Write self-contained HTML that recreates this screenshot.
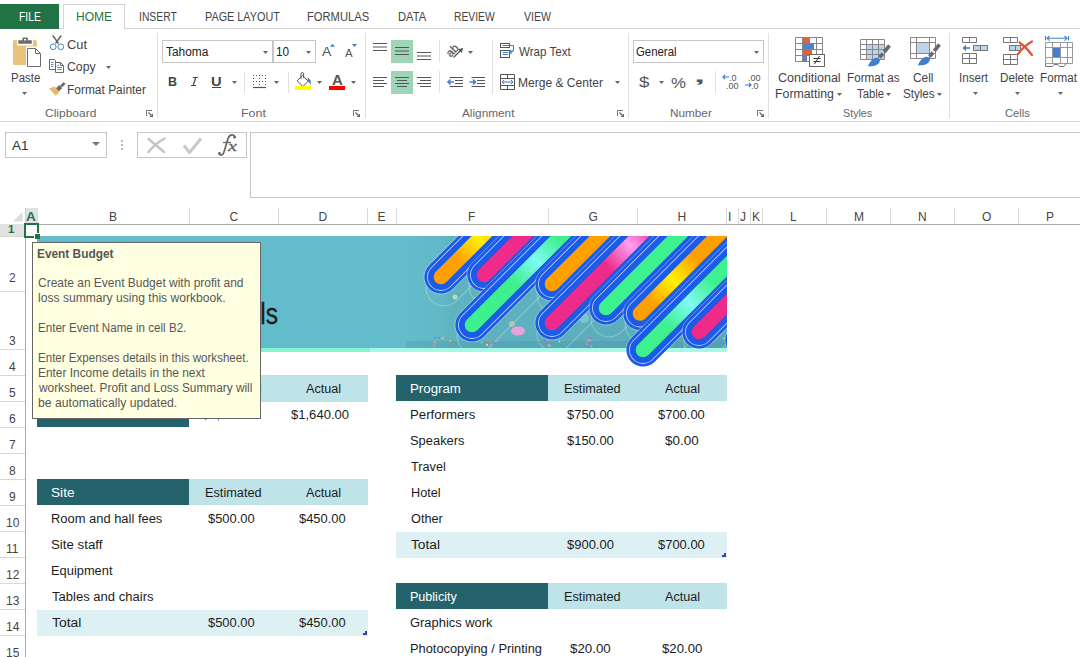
<!DOCTYPE html>
<html><head><meta charset="utf-8"><style>
html,body{margin:0;padding:0;width:1080px;height:657px;overflow:hidden;background:#fff;position:relative}
.t{position:absolute;font-family:"Liberation Sans",sans-serif;white-space:pre;transform-origin:0 0}
svg{position:absolute;overflow:visible}
</style></head><body>
<div style="position:absolute;left:0px;top:4px;width:59px;height:25px;background:#217346;"></div>
<div class="t" style="left:18.6px;top:10.9px;font-size:12.3px;line-height:12.3px;color:#ffffff;font-weight:400;transform:scaleX(0.8375);">FILE</div>
<div style="position:absolute;left:59px;top:28px;width:4px;height:1px;background:#d4d4d4;"></div>
<div style="position:absolute;left:124px;top:28px;width:956px;height:1px;background:#d4d4d4;"></div>
<div style="position:absolute;left:63px;top:4px;width:1px;height:25px;background:#d4d4d4;"></div>
<div style="position:absolute;left:124px;top:4px;width:1px;height:25px;background:#d4d4d4;"></div>
<div style="position:absolute;left:63px;top:4px;width:62px;height:1px;background:#d4d4d4;"></div>
<div class="t" style="left:75.5px;top:10.9px;font-size:12.3px;line-height:12.3px;color:#217346;font-weight:400;transform:scaleX(0.9800);">HOME</div>
<div class="t" style="left:139.2px;top:10.9px;font-size:12.3px;line-height:12.3px;color:#444444;font-weight:400;transform:scaleX(0.8419);">INSERT</div>
<div class="t" style="left:204.7px;top:10.9px;font-size:12.3px;line-height:12.3px;color:#444444;font-weight:400;transform:scaleX(0.8810);">PAGE LAYOUT</div>
<div class="t" style="left:307.4px;top:10.9px;font-size:12.3px;line-height:12.3px;color:#444444;font-weight:400;transform:scaleX(0.9090);">FORMULAS</div>
<div class="t" style="left:397.6px;top:10.9px;font-size:12.3px;line-height:12.3px;color:#444444;font-weight:400;transform:scaleX(0.9067);">DATA</div>
<div class="t" style="left:454.2px;top:10.9px;font-size:12.3px;line-height:12.3px;color:#444444;font-weight:400;transform:scaleX(0.8404);">REVIEW</div>
<div class="t" style="left:524.3px;top:10.9px;font-size:12.3px;line-height:12.3px;color:#444444;font-weight:400;transform:scaleX(0.8613);">VIEW</div>
<div style="position:absolute;left:0px;top:121px;width:1080px;height:1px;background:#d4d4d4;"></div>
<div style="position:absolute;left:157px;top:33px;width:1px;height:85px;background:#e1e1e1;"></div>
<div style="position:absolute;left:365px;top:33px;width:1px;height:85px;background:#e1e1e1;"></div>
<div style="position:absolute;left:628px;top:33px;width:1px;height:85px;background:#e1e1e1;"></div>
<div style="position:absolute;left:768px;top:33px;width:1px;height:85px;background:#e1e1e1;"></div>
<div style="position:absolute;left:949px;top:33px;width:1px;height:85px;background:#e1e1e1;"></div>
<div class="t" style="left:44.5px;top:107.9px;font-size:10.8px;line-height:10.8px;color:#666666;font-weight:400;transform:scaleX(1.1111);">Clipboard</div>
<div class="t" style="left:240.5px;top:107.9px;font-size:10.8px;line-height:10.8px;color:#666666;font-weight:400;transform:scaleX(1.1500);">Font</div>
<div class="t" style="left:462.4px;top:107.9px;font-size:10.8px;line-height:10.8px;color:#666666;font-weight:400;transform:scaleX(1.0917);">Alignment</div>
<div class="t" style="left:669.6px;top:107.9px;font-size:10.8px;line-height:10.8px;color:#666666;font-weight:400;transform:scaleX(1.0892);">Number</div>
<div class="t" style="left:843.4px;top:107.9px;font-size:10.8px;line-height:10.8px;color:#666666;font-weight:400;transform:scaleX(0.9929);">Styles</div>
<div class="t" style="left:1004.6px;top:107.9px;font-size:10.8px;line-height:10.8px;color:#666666;font-weight:400;transform:scaleX(1.0364);">Cells</div>
<svg style="left:146px;top:110px" width="8" height="8"><path d="M0.5 6V0.5H6" fill="none" stroke="#777" stroke-width="1"/><path d="M2.5 2.5L5.5 5.5" stroke="#666" stroke-width="1.2"/><path d="M7 3.5V7H3.5Z" fill="#666"/></svg>
<svg style="left:352.5px;top:110px" width="8" height="8"><path d="M0.5 6V0.5H6" fill="none" stroke="#777" stroke-width="1"/><path d="M2.5 2.5L5.5 5.5" stroke="#666" stroke-width="1.2"/><path d="M7 3.5V7H3.5Z" fill="#666"/></svg>
<svg style="left:616.5px;top:110px" width="8" height="8"><path d="M0.5 6V0.5H6" fill="none" stroke="#777" stroke-width="1"/><path d="M2.5 2.5L5.5 5.5" stroke="#666" stroke-width="1.2"/><path d="M7 3.5V7H3.5Z" fill="#666"/></svg>
<svg style="left:756.5px;top:110px" width="8" height="8"><path d="M0.5 6V0.5H6" fill="none" stroke="#777" stroke-width="1"/><path d="M2.5 2.5L5.5 5.5" stroke="#666" stroke-width="1.2"/><path d="M7 3.5V7H3.5Z" fill="#666"/></svg>
<svg style="left:0;top:0" width="160" height="100">
<path d="M14.5 40H17V45.5H33V40H35.5Q37 40 37 41.5V46.5H26V65H14.5Q13 65 13 63.5V41.5Q13 40 14.5 40Z" fill="#ebc27a"/>
<path d="M18.3 40.2H22.4V38.4Q22.4 37.4 23.4 37.4H26.9Q27.9 37.4 27.9 38.4V40.2H31.8V43.7H18.3Z" fill="#6b6b6b"/>
<rect x="24" y="38.9" width="2" height="1.6" fill="#fff"/>
<path d="M27.5 48.5H35.5L40.5 53.5V66.5H27.5Z" fill="#fff" stroke="#6e6e6e" stroke-width="1"/>
<path d="M35.5 48.5V53.5H40.5" fill="none" stroke="#6e6e6e" stroke-width="1"/>
<path d="M52.8 35.5L58.5 43.5M61.2 35.5L55.5 43.5" stroke="#666" stroke-width="1.5"/>
<circle cx="53.2" cy="46.8" r="2.9" fill="none" stroke="#4a86c8" stroke-width="1"/>
<circle cx="60.8" cy="46.8" r="2.9" fill="none" stroke="#4a86c8" stroke-width="1"/>
<path d="M49.5 59.5H54.5L55.5 60.5V69.5H49.5Z" fill="#fff" stroke="#6a6a6a" stroke-width="1"/>
<path d="M51 62.5H53.5M51 64.5H53.5M51 66.5H53.5" stroke="#3f7fcf" stroke-width="0.9"/>
<path d="M55.5 62.5H60.5L63.5 65.5V72.5H55.5Z" fill="#fff" stroke="#6a6a6a" stroke-width="1"/>
<path d="M60.5 62.5V65.5H63.5" fill="none" stroke="#6a6a6a" stroke-width="1"/>
<path d="M57.2 65.3H59M57.2 67.5H61.7M57.2 69.6H61.7" stroke="#3f7fcf" stroke-width="0.9"/>
<path d="M61.2 86.4L64.6 83" stroke="#6a6a6a" stroke-width="2.6"/>
<path d="M56.6 90.6L60.8 86.4" stroke="#6a6a6a" stroke-width="4.2"/>
<path d="M49.2 88.4L54.6 86.4L59.6 92L55.6 95.8Z" fill="#e9b96c"/>
</svg>
<div class="t" style="left:10.6px;top:71.9px;font-size:12px;line-height:12px;color:#444444;font-weight:400;transform:scaleX(0.9552);">Paste</div>
<svg style="left:22px;top:92px" width="6" height="4"><path d="M0 0H5L2.5 3Z" fill="#666"/></svg>
<div class="t" style="left:67.3px;top:38.5px;font-size:12px;line-height:12px;color:#444444;font-weight:400;transform:scaleX(1.0765);">Cut</div>
<div class="t" style="left:67.4px;top:61.4px;font-size:12px;line-height:12px;color:#444444;font-weight:400;transform:scaleX(1.0222);">Copy</div>
<svg style="left:106px;top:65.5px" width="6" height="4"><path d="M0 0H5L2.5 3Z" fill="#666"/></svg>
<div class="t" style="left:67.4px;top:84.3px;font-size:12px;line-height:12px;color:#444444;font-weight:400;transform:scaleX(0.9949);">Format Painter</div>
<div style="position:absolute;left:162px;top:40px;width:152px;height:21px;border:1px solid #c6c6c6"></div>
<div style="position:absolute;left:272px;top:40px;width:2px;height:22px;background:#c6c6c6;"></div>
<div class="t" style="left:165.9px;top:46.1px;font-size:12px;line-height:12px;color:#222;font-weight:400;transform:scaleX(0.9929);">Tahoma</div>
<svg style="left:263px;top:50.5px" width="6" height="4"><path d="M0 0H5L2.5 3Z" fill="#666"/></svg>
<svg style="left:306px;top:50.5px" width="6" height="4"><path d="M0 0H5L2.5 3Z" fill="#666"/></svg>
<div class="t" style="left:275.7px;top:46.1px;font-size:12px;line-height:12px;color:#222;font-weight:400;transform:scaleX(0.9833);">10</div>
<div class="t" style="left:322.2px;top:45.4px;font-size:13.5px;line-height:13.5px;color:#555;font-weight:400;transform:scaleX(1.0444);">A</div>
<div class="t" style="left:345.1px;top:47.9px;font-size:10.5px;line-height:10.5px;color:#555;font-weight:400;transform:scaleX(1.0857);">A</div>
<svg style="left:0;top:0" width="400" height="100"><path d="M330 46.8L332.5 43.8L335 46.8Z" fill="#4a80c0"/><path d="M352 44L354.5 47L357 44Z" fill="#4a80c0"/></svg>
<div class="t" style="left:167.9px;top:76.2px;font-size:12.5px;line-height:12.5px;color:#444;font-weight:700;transform:scaleX(1.0000);">B</div>
<svg style="left:0;top:0" width="240" height="100"><path d="M192.8 77.5H197.8M191 85.5H196M195.7 77.5L193.2 85.5" fill="none" stroke="#444" stroke-width="1.2"/></svg>
<div class="t" style="left:211.0px;top:76.2px;font-size:12.5px;line-height:12.5px;color:#444;font-weight:700;transform:scaleX(1.1714);">U</div>
<div style="position:absolute;left:212px;top:87px;width:9px;height:1px;background:#444;"></div>
<svg style="left:231.5px;top:81px" width="6" height="4"><path d="M0 0H5L2.5 3Z" fill="#666"/></svg>
<div style="position:absolute;left:244px;top:72px;width:1px;height:21px;background:#e1e1e1;"></div>
<svg style="left:0;top:0" width="400" height="100">
<rect x="253" y="75" width="1" height="1" fill="#555"/><rect x="256" y="75" width="1" height="1" fill="#555"/><rect x="259" y="75" width="1" height="1" fill="#555"/><rect x="262" y="75" width="1" height="1" fill="#555"/><rect x="265" y="75" width="1" height="1" fill="#555"/><rect x="253" y="81" width="1" height="1" fill="#555"/><rect x="256" y="81" width="1" height="1" fill="#555"/><rect x="259" y="81" width="1" height="1" fill="#555"/><rect x="262" y="81" width="1" height="1" fill="#555"/><rect x="265" y="81" width="1" height="1" fill="#555"/><rect x="253" y="78" width="1" height="1" fill="#555"/><rect x="259" y="78" width="1" height="1" fill="#555"/><rect x="265" y="78" width="1" height="1" fill="#555"/><rect x="253" y="84" width="1" height="1" fill="#555"/><rect x="259" y="84" width="1" height="1" fill="#555"/><rect x="265" y="84" width="1" height="1" fill="#555"/>
<path d="M253 87.5H266" stroke="#555" stroke-width="1.2"/>
<path d="M297.2 80.8L302.5 75.5L308.2 81.2L302.9 86.5Z" fill="#fff" stroke="#555" stroke-width="1"/>
<path d="M301 79V73.8Q301 72.6 302.3 72.6Q303.6 72.6 303.6 73.8V78" fill="none" stroke="#555" stroke-width="1"/>
<path d="M307.6 77.8Q311.6 79 310.8 85.2Q309.6 82.6 307.8 81.6Z" fill="#4a80c0"/>
<rect x="295" y="86" width="16" height="4" fill="#ffff00"/>
<rect x="329" y="86" width="16" height="4" fill="#ff0000"/>
</svg>
<svg style="left:274px;top:81px" width="6" height="4"><path d="M0 0H5L2.5 3Z" fill="#666"/></svg>
<div style="position:absolute;left:288px;top:72px;width:1px;height:21px;background:#e1e1e1;"></div>
<svg style="left:317px;top:81px" width="6" height="4"><path d="M0 0H5L2.5 3Z" fill="#666"/></svg>
<div class="t" style="left:331.9px;top:74.1px;font-size:13.8px;line-height:13.8px;color:#555;font-weight:700;transform:scaleX(1.0875);">A</div>
<svg style="left:351px;top:81px" width="6" height="4"><path d="M0 0H5L2.5 3Z" fill="#666"/></svg>
<svg style="left:0;top:0" width="640" height="100">
<rect x="391" y="40" width="22" height="23" fill="#9fd5b7"/>
<rect x="391" y="71" width="22" height="23" fill="#9fd5b7"/>
<g stroke="#555" stroke-width="1">
<path d="M373 43.5H387M373 47H387M373 50.5H387"/>
<path d="M395 47.5H409M395 51H409M395 54.5H409"/>
<path d="M417 52.5H431M417 56H431M417 59.5H431"/>
<path d="M373 77.5H387M373 80.5H384M373 83.5H387M373 86.5H384"/>
<path d="M395 77.5H409M397 80.5H407M395 83.5H409M397 86.5H407"/>
<path d="M417 77.5H431M420 80.5H431M417 83.5H431M420 86.5H431"/>
<path d="M449.5 77.5H463M455 80.5H463M455 83.5H463M449.5 86.5H463"/>
<path d="M471.5 77.5H485M477 80.5H485M477 83.5H485M471.5 86.5H485"/>
</g>
<path d="M448.5 82H454M450.5 79.5L448 82L450.5 84.5" fill="none" stroke="#4a80c0" stroke-width="1.6"/>
<path d="M469.5 82H475M473 79.5L475.5 82L473 84.5" fill="none" stroke="#4a80c0" stroke-width="1.6"/>
<path d="M453.5 57.5L462 49" stroke="#555" stroke-width="1.3"/>
<path d="M463 48L458 49.2L461.8 53Z" fill="#555"/>
<text x="445.5" y="54.5" font-family="Liberation Sans" font-size="11.5" fill="#555" stroke="#555" stroke-width="0.25" transform="rotate(-45 452 50)">ab</text>
<rect x="500.5" y="43.5" width="9" height="4" fill="none" stroke="#555" stroke-width="1"/>
<rect x="500.5" y="50.5" width="9" height="7" fill="none" stroke="#555" stroke-width="1"/>
<path d="M502.5 45.5H513.5M502.5 52.5H508M502.5 54.5H508" stroke="#3f7fcf" stroke-width="1"/>
<path d="M513.5 45.5V49Q513.5 52 510.5 52H510" fill="none" stroke="#3f7fcf" stroke-width="1.1"/>
<path d="M508.5 52L511.5 49.5V54.5Z" fill="#3f7fcf"/>
<path d="M500.5 74.5H514.5V89.5H500.5Z M500.5 78.5H514.5 M500.5 85.5H514.5 M507.5 74.5V78.5 M507.5 85.5V89.5" fill="none" stroke="#555" stroke-width="1"/>
<path d="M502 82H513M504 80L502 82L504 84M511 80L513 82L511 84" fill="none" stroke="#3f7fcf" stroke-width="1"/>
</svg>
<div style="position:absolute;left:439px;top:40px;width:1px;height:22px;background:#e1e1e1;"></div>
<div style="position:absolute;left:439px;top:71px;width:1px;height:22px;background:#e1e1e1;"></div>
<div style="position:absolute;left:492px;top:40px;width:1px;height:54px;background:#e1e1e1;"></div>
<svg style="left:468px;top:50.5px" width="6" height="4"><path d="M0 0H5L2.5 3Z" fill="#666"/></svg>
<div class="t" style="left:519.4px;top:46.3px;font-size:12px;line-height:12px;color:#444444;font-weight:400;transform:scaleX(0.9642);">Wrap Text</div>
<div class="t" style="left:518.4px;top:77.3px;font-size:12px;line-height:12px;color:#444444;font-weight:400;transform:scaleX(1.0036);">Merge &amp; Center</div>
<svg style="left:614.5px;top:81px" width="6" height="4"><path d="M0 0H5L2.5 3Z" fill="#666"/></svg>
<div style="position:absolute;left:633px;top:40px;width:129px;height:21px;border:1px solid #c6c6c6"></div>
<div class="t" style="left:635.8px;top:46.2px;font-size:12px;line-height:12px;color:#222;font-weight:400;transform:scaleX(0.9488);">General</div>
<svg style="left:754px;top:50.5px" width="6" height="4"><path d="M0 0H5L2.5 3Z" fill="#666"/></svg>
<div class="t" style="left:639.1px;top:75.1px;font-size:14px;line-height:14px;color:#555;font-weight:400;transform:scaleX(1.3333);">$</div>
<svg style="left:658.5px;top:81px" width="6" height="4"><path d="M0 0H5L2.5 3Z" fill="#666"/></svg>
<div class="t" style="left:670.7px;top:75.1px;font-size:15.5px;line-height:15.5px;color:#555;font-weight:400;transform:scaleX(1.0833);">%</div>
<div class="t" style="left:694.0px;top:69.0px;font-size:16px;line-height:16px;color:#555;font-weight:700;transform:scaleX(2.5000);">,</div>
<div style="position:absolute;left:715px;top:71px;width:1px;height:22px;background:#e1e1e1;"></div>
<svg style="left:0;top:0" width="800" height="100">
<text x="729" y="81" font-family="Liberation Sans" font-size="9" fill="#555">.0</text>
<text x="726" y="89" font-family="Liberation Sans" font-size="9" fill="#555">.00</text>
<path d="M723 77H729M725 75L723 77L725 79" fill="none" stroke="#3f7fcf" stroke-width="1.2"/>
<text x="748" y="81" font-family="Liberation Sans" font-size="9" fill="#555">.00</text>
<text x="751" y="89" font-family="Liberation Sans" font-size="9" fill="#555">.0</text>
<path d="M745 85H751M749 83L751 85L749 87" fill="none" stroke="#3f7fcf" stroke-width="1.2"/>
</svg>
<svg style="left:0;top:0" width="1080" height="100">
<g fill="none" stroke="#888" stroke-width="1">
<path d="M795.5 37.5H822.5V61.5H795.5Z M795.5 43.5H822.5 M795.5 49.5H822.5 M795.5 55.5H822.5 M802.5 37.5V61.5 M809.5 37.5V61.5 M816.5 37.5V61.5"/>
</g>
<rect x="803" y="38" width="6" height="5.5" fill="#e06040"/>
<rect x="803" y="43.5" width="11" height="6" fill="#4a86c8"/>
<rect x="803" y="49.5" width="9" height="6" fill="#e06040"/>
<rect x="803" y="55.5" width="4" height="6" fill="#4a86c8"/>
<rect x="809.5" y="54.5" width="15" height="12" fill="#fff" stroke="#666"/>
<path d="M813.5 58.5H820.5M813.5 61.5H820.5M819.5 56L814.5 64" fill="none" stroke="#333" stroke-width="1"/>
<rect x="866" y="45" width="19" height="14" fill="#bcd3ea"/>
<g fill="none" stroke="#888" stroke-width="1">
<path d="M860.5 39.5H884.5V59.5H860.5Z M860.5 44.5H884.5 M860.5 49.5H884.5 M860.5 54.5H884.5 M866.5 39.5V59.5 M872.5 39.5V59.5 M878.5 39.5V59.5"/>
</g>
<rect x="917" y="43" width="12" height="10" fill="#bcd3ea"/>
<g fill="none" stroke="#888" stroke-width="1">
<path d="M910.5 37.5H935.5V58.5H910.5Z M910.5 42.5H935.5 M910.5 53.5H935.5 M916.5 37.5V58.5 M929.5 37.5V58.5"/>
</g>
<path d="M879.5 57.5L883 53.5" stroke="#6a6a6a" stroke-width="3.6"/><path d="M884.2 52L889.5 45.5" stroke="#6a6a6a" stroke-width="3.6"/>
<path d="M868 66.5Q870 60 875 58Q879 57 880 60Q880 64 874 66Z" fill="#3f7fcf"/>
<path d="M929.5 56.5L933 52.5" stroke="#6a6a6a" stroke-width="3.6"/><path d="M934.2 51L939.5 44.5" stroke="#6a6a6a" stroke-width="3.6"/>
<path d="M918 65.5Q920 59 925 57Q929 56 930 59Q930 63 924 65Z" fill="#3f7fcf"/>
</svg>
<div class="t" style="left:777.7px;top:72.0px;font-size:12px;line-height:12px;color:#444444;font-weight:400;transform:scaleX(1.0431);">Conditional</div>
<div class="t" style="left:774.8px;top:87.8px;font-size:12px;line-height:12px;color:#444444;font-weight:400;transform:scaleX(1.0268);">Formatting</div>
<svg style="left:837px;top:93px" width="6" height="4"><path d="M0 0H5L2.5 3Z" fill="#666"/></svg>
<div class="t" style="left:847.0px;top:72.0px;font-size:12px;line-height:12px;color:#444444;font-weight:400;transform:scaleX(0.9750);">Format as</div>
<div class="t" style="left:857.0px;top:87.8px;font-size:12px;line-height:12px;color:#444444;font-weight:400;transform:scaleX(0.9393);">Table</div>
<svg style="left:885.5px;top:93px" width="6" height="4"><path d="M0 0H5L2.5 3Z" fill="#666"/></svg>
<div class="t" style="left:912.7px;top:72.0px;font-size:12px;line-height:12px;color:#444444;font-weight:400;transform:scaleX(0.9895);">Cell</div>
<div class="t" style="left:903.2px;top:87.8px;font-size:12px;line-height:12px;color:#444444;font-weight:400;transform:scaleX(0.9677);">Styles</div>
<svg style="left:937px;top:93px" width="6" height="4"><path d="M0 0H5L2.5 3Z" fill="#666"/></svg>
<svg style="left:0;top:0" width="1080" height="100">
<g fill="none" stroke="#777" stroke-width="1">
<path d="M962.5 37.5H976.5V42.5H962.5Z M969.5 37.5V42.5"/>
<path d="M962.5 53.5H976.5V63.5H962.5Z M962.5 58.5H976.5 M969.5 53.5V63.5"/>
<path d="M1003.5 37.5H1017.5V42.5H1003.5Z M1010.5 37.5V42.5"/>
<path d="M1003.5 54.5H1017.5V64.5H1003.5Z M1003.5 59.5H1017.5 M1010.5 54.5V64.5"/>
</g>
<rect x="973.5" y="45.5" width="14" height="5" fill="#bcd3ea" stroke="#777"/>
<path d="M980.5 45.5V50.5" stroke="#777"/>
<path d="M964 48H970" stroke="#3f7fcf" stroke-width="1.6"/>
<path d="M962.5 48L966 44.8V51.2Z" fill="#3f7fcf"/>
<rect x="1009.5" y="45.5" width="11" height="5" fill="#bcd3ea" stroke="#777"/>
<path d="M1015.5 45.5V50.5" stroke="#777"/>
<path d="M1018 54Q1024 46 1032 41.5M1019.5 42.5Q1026 47 1032 55" fill="none" stroke="#e0553a" stroke-width="2.2" stroke-linecap="round"/>
<path d="M1047 38.3H1067M1045.5 36V40.5M1068.5 36V40.5M1049.5 36L1047 38.3L1049.5 40.6M1064.5 36L1067 38.3L1064.5 40.6" fill="none" stroke="#3f7fcf" stroke-width="1.1"/>
<g fill="none" stroke="#999" stroke-width="1">
<path d="M1045.5 42.5H1072.5V63.5H1045.5Z M1045.5 47.5H1072.5 M1045.5 57.5H1072.5 M1052.5 42.5V63.5 M1060.5 42.5V63.5 M1067.5 42.5V63.5"/>
</g>
<path d="M1045.5 63.5V66.5H1052.5L1054 64.5H1058L1059.5 66.5H1064L1066 63.5" fill="none" stroke="#777" stroke-width="1"/>
<rect x="1053" y="48" width="7" height="9" fill="#3f7fcf"/>
</svg>
<div class="t" style="left:959.3px;top:72.0px;font-size:12px;line-height:12px;color:#444444;font-weight:400;transform:scaleX(0.9655);">Insert</div>
<svg style="left:972.5px;top:92px" width="6" height="4"><path d="M0 0H5L2.5 3Z" fill="#666"/></svg>
<div class="t" style="left:999.6px;top:72.0px;font-size:12px;line-height:12px;color:#444444;font-weight:400;transform:scaleX(0.9758);">Delete</div>
<svg style="left:1014.5px;top:92px" width="6" height="4"><path d="M0 0H5L2.5 3Z" fill="#666"/></svg>
<div class="t" style="left:1040.2px;top:72.0px;font-size:12px;line-height:12px;color:#444444;font-weight:400;transform:scaleX(0.9730);">Format</div>
<svg style="left:1057.5px;top:92px" width="6" height="4"><path d="M0 0H5L2.5 3Z" fill="#666"/></svg>
<div style="position:absolute;left:5px;top:132px;width:100px;height:24px;border:1px solid #c6c6c6"></div>
<div class="t" style="left:12.0px;top:139.6px;font-size:12px;line-height:12px;color:#333;font-weight:400;transform:scaleX(1.1214);">A1</div>
<svg style="left:92px;top:142px" width="9" height="5"><path d="M0 0H8L4 4Z" fill="#777"/></svg>
<svg style="left:0;top:0" width="260" height="200"><circle cx="122" cy="141" r="0.9" fill="#999"/><circle cx="122" cy="145" r="0.9" fill="#999"/><circle cx="122" cy="149" r="0.9" fill="#999"/></svg>
<div style="position:absolute;left:137px;top:132px;width:108px;height:24px;border:1px solid #c6c6c6"></div>
<svg style="left:0;top:0" width="260" height="200">
<path d="M148.5 152Q156 143 164.5 138.5M148.5 139Q156 145 164 152" fill="none" stroke="#c4c4c4" stroke-width="2.4" stroke-linecap="round"/>
<path d="M184 145.5L189.5 152.5L201 138.5" fill="none" stroke="#c8c8c8" stroke-width="3" stroke-linejoin="round"/>
</svg>
<svg style="left:0;top:0" width="260" height="200"><path d="M235 136.8C234 134 229.5 134 228 138.5L224 152C223 155.5 220 156 219 153.5" fill="none" stroke="#666" stroke-width="1.7"/><path d="M223 142.5H231" stroke="#666" stroke-width="1.3"/><circle cx="234.6" cy="137.2" r="1.4" fill="#666"/><circle cx="219.4" cy="153.4" r="1.4" fill="#666"/></svg>
<div class="t" style="left:227.8px;top:139.2px;font-size:14.5px;line-height:14.5px;color:#666;font-weight:400;transform:scaleX(1.3833);font-family:'Liberation Serif',serif;font-style:italic;-webkit-text-stroke:0.35px #666;">x</div>
<div style="position:absolute;left:250px;top:132px;width:840px;height:64px;border:1px solid #c6c6c6;border-right:none"></div>
<div style="position:absolute;left:25px;top:208px;width:12px;height:16px;background:#e1e1e1;"></div>
<div style="position:absolute;left:37px;top:208px;width:1px;height:16px;background:#dadada;"></div>
<div style="position:absolute;left:189px;top:208px;width:1px;height:16px;background:#dadada;"></div>
<div style="position:absolute;left:278px;top:208px;width:1px;height:16px;background:#dadada;"></div>
<div style="position:absolute;left:367px;top:208px;width:1px;height:16px;background:#dadada;"></div>
<div style="position:absolute;left:396px;top:208px;width:1px;height:16px;background:#dadada;"></div>
<div style="position:absolute;left:548px;top:208px;width:1px;height:16px;background:#dadada;"></div>
<div style="position:absolute;left:637px;top:208px;width:1px;height:16px;background:#dadada;"></div>
<div style="position:absolute;left:726px;top:208px;width:1px;height:16px;background:#dadada;"></div>
<div style="position:absolute;left:738px;top:208px;width:1px;height:16px;background:#dadada;"></div>
<div style="position:absolute;left:750px;top:208px;width:1px;height:16px;background:#dadada;"></div>
<div style="position:absolute;left:762px;top:208px;width:1px;height:16px;background:#dadada;"></div>
<div style="position:absolute;left:826px;top:208px;width:1px;height:16px;background:#dadada;"></div>
<div style="position:absolute;left:890px;top:208px;width:1px;height:16px;background:#dadada;"></div>
<div style="position:absolute;left:954px;top:208px;width:1px;height:16px;background:#dadada;"></div>
<div style="position:absolute;left:1018px;top:208px;width:1px;height:16px;background:#dadada;"></div>
<div style="position:absolute;left:0px;top:224px;width:1080px;height:1px;background:#ababab;"></div>
<svg style="left:12px;top:211px" width="12" height="12"><path d="M10.5 1V10.5H1Z" fill="#dcdcdc"/></svg>
<div style="position:absolute;left:0px;top:224px;width:25px;height:12px;background:#e1e1e1;"></div>
<div style="position:absolute;left:0px;top:236px;width:25px;height:1px;background:#d8d8d8;"></div>
<div style="position:absolute;left:0px;top:291px;width:25px;height:1px;background:#d8d8d8;"></div>
<div style="position:absolute;left:0px;top:349px;width:25px;height:1px;background:#d8d8d8;"></div>
<div style="position:absolute;left:0px;top:375px;width:25px;height:1px;background:#d8d8d8;"></div>
<div style="position:absolute;left:0px;top:401px;width:25px;height:1px;background:#d8d8d8;"></div>
<div style="position:absolute;left:0px;top:427px;width:25px;height:1px;background:#d8d8d8;"></div>
<div style="position:absolute;left:0px;top:453px;width:25px;height:1px;background:#d8d8d8;"></div>
<div style="position:absolute;left:0px;top:479px;width:25px;height:1px;background:#d8d8d8;"></div>
<div style="position:absolute;left:0px;top:505px;width:25px;height:1px;background:#d8d8d8;"></div>
<div style="position:absolute;left:0px;top:531px;width:25px;height:1px;background:#d8d8d8;"></div>
<div style="position:absolute;left:0px;top:557px;width:25px;height:1px;background:#d8d8d8;"></div>
<div style="position:absolute;left:0px;top:583px;width:25px;height:1px;background:#d8d8d8;"></div>
<div style="position:absolute;left:0px;top:609px;width:25px;height:1px;background:#d8d8d8;"></div>
<div style="position:absolute;left:0px;top:635px;width:25px;height:1px;background:#d8d8d8;"></div>
<div style="position:absolute;left:0px;top:661px;width:25px;height:1px;background:#d8d8d8;"></div>
<div style="position:absolute;left:25px;top:208px;width:1px;height:16px;background:#d0d0d0;"></div>
<div style="position:absolute;left:25px;top:224px;width:1px;height:433px;background:#ababab;"></div>
<div style="position:absolute;left:37px;top:236px;width:690px;height:112px;background:#63bccb;"></div>
<div style="position:absolute;left:37px;top:348px;width:690px;height:4px;background:#84f4d0;"></div>
<div style="position:absolute;left:370px;top:348px;width:357px;height:4px;background:#a6f8e6;"></div>
<svg style="left:0;top:0" width="1080" height="657">
<defs>
<clipPath id="bc"><rect x="37" y="236" width="690" height="115"/></clipPath>
<clipPath id="bc2"><rect x="37" y="236" width="690" height="140"/></clipPath>
<linearGradient id="img" x1="0" y1="0" x2="1" y2="0"><stop offset="0" stop-color="#63bccb" stop-opacity="0"/><stop offset="0.15" stop-color="#5fb3c0"/><stop offset="1" stop-color="#59a9b8"/></linearGradient>
</defs>
<rect x="405" y="236" width="322" height="112" fill="url(#img)"/>
<g clip-path="url(#bc2)" stroke-linecap="round">
</g>
</svg>
<svg style="left:0;top:0" width="1080" height="657"><defs><clipPath id="bk"><rect x="37" y="236" width="690" height="135"/></clipPath><linearGradient id="cg0" gradientUnits="userSpaceOnUse" x1="441" y1="277" x2="641" y2="77"><stop offset="0" stop-color="#ffa000"/><stop offset="0.084" stop-color="#ffa000"/><stop offset="0.194" stop-color="#fff200"/><stop offset="0.304" stop-color="#ffa000"/><stop offset="1" stop-color="#ffa000"/></linearGradient><linearGradient id="cg1"><stop offset="0" stop-color="#ee2a8a"/></linearGradient><linearGradient id="cg2" gradientUnits="userSpaceOnUse" x1="472" y1="325" x2="672" y2="125"><stop offset="0" stop-color="#3ff08e"/><stop offset="0.212" stop-color="#3ff08e"/><stop offset="0.322" stop-color="#7ff9f4"/><stop offset="0.432" stop-color="#3ff08e"/><stop offset="1" stop-color="#3ff08e"/></linearGradient><linearGradient id="cg3"><stop offset="0" stop-color="#ffa000"/></linearGradient><linearGradient id="cg4" gradientUnits="userSpaceOnUse" x1="552" y1="323" x2="752" y2="123"><stop offset="0" stop-color="#ee2a8a"/><stop offset="0.279" stop-color="#ee2a8a"/><stop offset="0.389" stop-color="#ff9ef0"/><stop offset="0.499" stop-color="#ee2a8a"/><stop offset="1" stop-color="#ee2a8a"/></linearGradient><linearGradient id="cg5"><stop offset="0" stop-color="#3ff08e"/></linearGradient><linearGradient id="cg6" gradientUnits="userSpaceOnUse" x1="640" y1="313.5" x2="840" y2="113.5"><stop offset="0" stop-color="#ffa000"/><stop offset="0.056" stop-color="#ffa000"/><stop offset="0.166" stop-color="#fff200"/><stop offset="0.276" stop-color="#ffa000"/><stop offset="1" stop-color="#ffa000"/></linearGradient><linearGradient id="cg7" gradientUnits="userSpaceOnUse" x1="643" y1="350" x2="843" y2="150"><stop offset="0" stop-color="#3ff08e"/><stop offset="0.123" stop-color="#3ff08e"/><stop offset="0.233" stop-color="#7ff9f4"/><stop offset="0.343" stop-color="#3ff08e"/><stop offset="1" stop-color="#3ff08e"/></linearGradient><linearGradient id="cg8"><stop offset="0" stop-color="#ee2a8a"/></linearGradient><linearGradient id="cg9"><stop offset="0" stop-color="#3ff08e"/></linearGradient><clipPath id="bb"><rect x="37" y="236" width="690" height="112"/></clipPath></defs><g clip-path="url(#bb)"><rect x="406" y="341" width="321" height="7" fill="#3f8d9c" opacity="0.25"/><rect x="426" y="270" width="336" height="36" rx="18" transform="rotate(-45 444 288)" fill="none" stroke="#ffffff" stroke-opacity="0.28" stroke-width="1"/><rect x="469" y="268" width="336" height="36" rx="18" transform="rotate(-45 487 286)" fill="none" stroke="#ffffff" stroke-opacity="0.28" stroke-width="1"/><rect x="457" y="318" width="336" height="36" rx="18" transform="rotate(-45 475 336)" fill="none" stroke="#ffffff" stroke-opacity="0.28" stroke-width="1"/><rect x="537" y="277" width="336" height="36" rx="18" transform="rotate(-45 555 295)" fill="none" stroke="#ffffff" stroke-opacity="0.28" stroke-width="1"/><rect x="537" y="316" width="336" height="36" rx="18" transform="rotate(-45 555 334)" fill="none" stroke="#ffffff" stroke-opacity="0.28" stroke-width="1"/><rect x="591" y="301" width="336" height="36" rx="18" transform="rotate(-45 609 319)" fill="none" stroke="#ffffff" stroke-opacity="0.28" stroke-width="1"/><rect x="625" y="306.5" width="336" height="36" rx="18" transform="rotate(-45 643 324.5)" fill="none" stroke="#ffffff" stroke-opacity="0.28" stroke-width="1"/><rect x="628" y="343" width="336" height="36" rx="18" transform="rotate(-45 646 361)" fill="none" stroke="#ffffff" stroke-opacity="0.28" stroke-width="1"/><rect x="684" y="325" width="336" height="36" rx="18" transform="rotate(-45 702 343)" fill="none" stroke="#ffffff" stroke-opacity="0.28" stroke-width="1"/><rect x="727" y="333" width="336" height="36" rx="18" transform="rotate(-45 745 351)" fill="none" stroke="#ffffff" stroke-opacity="0.28" stroke-width="1"/><rect x="441.7" y="337.5" width="1.6" height="1.6" fill="#f0f0a0" opacity="0.8"/><rect x="433.4" y="344.2" width="1.6" height="1.6" fill="#ff5a5a" opacity="0.8"/><rect x="443.0" y="336.6" width="1.6" height="1.6" fill="#ff9a3c" opacity="0.8"/><rect x="438.4" y="336.9" width="1.6" height="1.6" fill="#8a5cff" opacity="0.8"/><rect x="434.1" y="336.9" width="1.6" height="1.6" fill="#8a5cff" opacity="0.8"/><rect x="433.8" y="341.7" width="1.6" height="1.6" fill="#ffd23f" opacity="0.8"/><rect x="450.9" y="341.8" width="1.6" height="1.6" fill="#ff5a5a" opacity="0.8"/><rect x="449.3" y="340.0" width="1.6" height="1.6" fill="#ffd23f" opacity="0.8"/><rect x="433.4" y="344.6" width="1.6" height="1.6" fill="#ff8fd0" opacity="0.8"/><rect x="489.3" y="341.4" width="1.6" height="1.6" fill="#ff9a3c" opacity="0.8"/><rect x="486.3" y="344.2" width="1.6" height="1.6" fill="#ffd23f" opacity="0.8"/><rect x="480.8" y="341.7" width="1.6" height="1.6" fill="#ffd23f" opacity="0.8"/><rect x="488.1" y="341.5" width="1.6" height="1.6" fill="#ff5a5a" opacity="0.8"/><rect x="493.2" y="342.2" width="1.6" height="1.6" fill="#8a5cff" opacity="0.8"/><rect x="496.4" y="340.3" width="1.6" height="1.6" fill="#ff8fd0" opacity="0.8"/><rect x="490.6" y="345.2" width="1.6" height="1.6" fill="#ff8fd0" opacity="0.8"/><rect x="486.1" y="343.9" width="1.6" height="1.6" fill="#f0f0a0" opacity="0.8"/><rect x="499.1" y="336.8" width="1.6" height="1.6" fill="#ff8fd0" opacity="0.8"/><rect x="548.1" y="344.8" width="1.6" height="1.6" fill="#f0f0a0" opacity="0.8"/><rect x="546.2" y="342.1" width="1.6" height="1.6" fill="#ff5a5a" opacity="0.8"/><rect x="538.0" y="340.2" width="1.6" height="1.6" fill="#ff8fd0" opacity="0.8"/><rect x="538.8" y="340.9" width="1.6" height="1.6" fill="#ff5a5a" opacity="0.8"/><rect x="559.1" y="336.8" width="1.6" height="1.6" fill="#ff9a3c" opacity="0.8"/><rect x="549.3" y="344.8" width="1.6" height="1.6" fill="#ff8fd0" opacity="0.8"/><rect x="543.5" y="339.5" width="1.6" height="1.6" fill="#8a5cff" opacity="0.8"/><rect x="549.5" y="340.6" width="1.6" height="1.6" fill="#ff5a5a" opacity="0.8"/><rect x="558.6" y="340.7" width="1.6" height="1.6" fill="#f0f0a0" opacity="0.8"/><rect x="586.0" y="343.3" width="1.6" height="1.6" fill="#ff8fd0" opacity="0.8"/><rect x="594.7" y="345.9" width="1.6" height="1.6" fill="#8a5cff" opacity="0.8"/><rect x="589.3" y="339.9" width="1.6" height="1.6" fill="#f0f0a0" opacity="0.8"/><rect x="590.2" y="345.4" width="1.6" height="1.6" fill="#ff8fd0" opacity="0.8"/><rect x="587.5" y="337.2" width="1.6" height="1.6" fill="#ff5a5a" opacity="0.8"/><rect x="588.3" y="338.9" width="1.6" height="1.6" fill="#f0f0a0" opacity="0.8"/><rect x="588.7" y="339.9" width="1.6" height="1.6" fill="#8a5cff" opacity="0.8"/><rect x="586.2" y="340.5" width="1.6" height="1.6" fill="#ff9a3c" opacity="0.8"/><rect x="589.2" y="337.4" width="1.6" height="1.6" fill="#8a5cff" opacity="0.8"/><rect x="718.9" y="338.8" width="1.6" height="1.6" fill="#8a5cff" opacity="0.8"/><rect x="724.4" y="342.8" width="1.6" height="1.6" fill="#8a5cff" opacity="0.8"/><rect x="723.1" y="337.5" width="1.6" height="1.6" fill="#ffd23f" opacity="0.8"/><rect x="686.8" y="342.6" width="1.6" height="1.6" fill="#ff5a5a" opacity="0.8"/><rect x="701.8" y="341.9" width="1.6" height="1.6" fill="#ff8fd0" opacity="0.8"/><rect x="692.7" y="337.5" width="1.6" height="1.6" fill="#ff9a3c" opacity="0.8"/><rect x="696.6" y="341.7" width="1.6" height="1.6" fill="#ffd23f" opacity="0.8"/><rect x="711.1" y="341.2" width="1.6" height="1.6" fill="#ff9a3c" opacity="0.8"/><rect x="709.5" y="343.4" width="1.6" height="1.6" fill="#8a5cff" opacity="0.8"/><ellipse cx="518" cy="331" rx="7" ry="4.5" fill="#ffa0e0" opacity="0.85"/><circle cx="512" cy="324" r="3" fill="#ffd0a0" opacity="0.5"/><circle cx="584" cy="318" r="5" fill="#aef" opacity="0.35"/><circle cx="455" cy="297" r="2.5" fill="#f7f2b0" opacity="0.6"/></g><g clip-path="url(#bk)" stroke-linecap="round" fill="none"><path d="M441 277L641 77" stroke="#ffffff" stroke-opacity="0.3" stroke-width="35"/><path d="M441 277L641 77" stroke="#1c5ae8" stroke-width="33.2"/><path d="M441 277L641 77" stroke="#c4d8ff" stroke-width="27.8"/><path d="M441 277L641 77" stroke="#1c5ae8" stroke-width="26.2"/><path d="M441 277L641 77" stroke="url(#cg0)" stroke-width="14.6"/><path d="M484 275L684 75" stroke="#ffffff" stroke-opacity="0.3" stroke-width="35"/><path d="M484 275L684 75" stroke="#1c5ae8" stroke-width="33.2"/><path d="M484 275L684 75" stroke="#c4d8ff" stroke-width="27.8"/><path d="M484 275L684 75" stroke="#1c5ae8" stroke-width="26.2"/><path d="M484 275L684 75" stroke="url(#cg1)" stroke-width="14.6"/><path d="M472 325L672 125" stroke="#ffffff" stroke-opacity="0.3" stroke-width="35"/><path d="M472 325L672 125" stroke="#1c5ae8" stroke-width="33.2"/><path d="M472 325L672 125" stroke="#c4d8ff" stroke-width="27.8"/><path d="M472 325L672 125" stroke="#1c5ae8" stroke-width="26.2"/><path d="M472 325L672 125" stroke="url(#cg2)" stroke-width="14.6"/><path d="M552 284L752 84" stroke="#ffffff" stroke-opacity="0.3" stroke-width="35"/><path d="M552 284L752 84" stroke="#1c5ae8" stroke-width="33.2"/><path d="M552 284L752 84" stroke="#c4d8ff" stroke-width="27.8"/><path d="M552 284L752 84" stroke="#1c5ae8" stroke-width="26.2"/><path d="M552 284L752 84" stroke="url(#cg3)" stroke-width="14.6"/><path d="M552 323L752 123" stroke="#ffffff" stroke-opacity="0.3" stroke-width="35"/><path d="M552 323L752 123" stroke="#1c5ae8" stroke-width="33.2"/><path d="M552 323L752 123" stroke="#c4d8ff" stroke-width="27.8"/><path d="M552 323L752 123" stroke="#1c5ae8" stroke-width="26.2"/><path d="M552 323L752 123" stroke="url(#cg4)" stroke-width="14.6"/><path d="M606 308L806 108" stroke="#ffffff" stroke-opacity="0.3" stroke-width="35"/><path d="M606 308L806 108" stroke="#1c5ae8" stroke-width="33.2"/><path d="M606 308L806 108" stroke="#c4d8ff" stroke-width="27.8"/><path d="M606 308L806 108" stroke="#1c5ae8" stroke-width="26.2"/><path d="M606 308L806 108" stroke="url(#cg5)" stroke-width="14.6"/><path d="M640 313.5L840 113.5" stroke="#ffffff" stroke-opacity="0.3" stroke-width="35"/><path d="M640 313.5L840 113.5" stroke="#1c5ae8" stroke-width="33.2"/><path d="M640 313.5L840 113.5" stroke="#c4d8ff" stroke-width="27.8"/><path d="M640 313.5L840 113.5" stroke="#1c5ae8" stroke-width="26.2"/><path d="M640 313.5L840 113.5" stroke="url(#cg6)" stroke-width="14.6"/><path d="M643 350L843 150" stroke="#ffffff" stroke-opacity="0.3" stroke-width="35"/><path d="M643 350L843 150" stroke="#1c5ae8" stroke-width="33.2"/><path d="M643 350L843 150" stroke="#c4d8ff" stroke-width="27.8"/><path d="M643 350L843 150" stroke="#1c5ae8" stroke-width="26.2"/><path d="M643 350L843 150" stroke="url(#cg7)" stroke-width="14.6"/><path d="M699 332L899 132" stroke="#ffffff" stroke-opacity="0.3" stroke-width="35"/><path d="M699 332L899 132" stroke="#1c5ae8" stroke-width="33.2"/><path d="M699 332L899 132" stroke="#c4d8ff" stroke-width="27.8"/><path d="M699 332L899 132" stroke="#1c5ae8" stroke-width="26.2"/><path d="M699 332L899 132" stroke="url(#cg8)" stroke-width="14.6"/><path d="M742 340L942 140" stroke="#ffffff" stroke-opacity="0.3" stroke-width="35"/><path d="M742 340L942 140" stroke="#1c5ae8" stroke-width="33.2"/><path d="M742 340L942 140" stroke="#c4d8ff" stroke-width="27.8"/><path d="M742 340L942 140" stroke="#1c5ae8" stroke-width="26.2"/><path d="M742 340L942 140" stroke="url(#cg9)" stroke-width="14.6"/></g></svg>
<div style="position:absolute;left:727px;top:236px;width:60px;height:140px;background:#ffffff;"></div>
<div class="t" style="left:133.2px;top:299.2px;font-size:30px;line-height:30px;color:#1e1e1e;font-weight:400;transform:scaleX(0.82);-webkit-text-stroke:0.3px #1e1e1e;">Event Details</div>
<div style="position:absolute;left:24px;top:223px;width:11px;height:11px;border:2px solid #217346"></div>
<div style="position:absolute;left:35px;top:234px;width:5px;height:5px;background:#217346;box-shadow:-1px -1px 0 0 #fff;"></div>
<div class="t" style="left:26.2px;top:210.3px;font-size:13px;line-height:13px;color:#217346;font-weight:700;transform:scaleX(1.0375);">A</div>
<div class="t" style="left:109.0px;top:211.3px;font-size:12px;line-height:12px;color:#444;font-weight:400;">B</div>
<div class="t" style="left:229.5px;top:211.3px;font-size:12px;line-height:12px;color:#444;font-weight:400;">C</div>
<div class="t" style="left:318.5px;top:211.3px;font-size:12px;line-height:12px;color:#444;font-weight:400;">D</div>
<div class="t" style="left:377.5px;top:211.3px;font-size:12px;line-height:12px;color:#444;font-weight:400;">E</div>
<div class="t" style="left:468.0px;top:211.3px;font-size:12px;line-height:12px;color:#444;font-weight:400;">F</div>
<div class="t" style="left:588.5px;top:211.3px;font-size:12px;line-height:12px;color:#444;font-weight:400;">G</div>
<div class="t" style="left:677.5px;top:211.3px;font-size:12px;line-height:12px;color:#444;font-weight:400;">H</div>
<div class="t" style="left:728.0px;top:211.3px;font-size:12px;line-height:12px;color:#444;font-weight:400;">I</div>
<div class="t" style="left:740.0px;top:211.3px;font-size:12px;line-height:12px;color:#444;font-weight:400;">J</div>
<div class="t" style="left:752.0px;top:211.3px;font-size:12px;line-height:12px;color:#444;font-weight:400;">K</div>
<div class="t" style="left:790.0px;top:211.3px;font-size:12px;line-height:12px;color:#444;font-weight:400;">L</div>
<div class="t" style="left:854.0px;top:211.3px;font-size:12px;line-height:12px;color:#444;font-weight:400;">M</div>
<div class="t" style="left:918.0px;top:211.3px;font-size:12px;line-height:12px;color:#444;font-weight:400;">N</div>
<div class="t" style="left:982.0px;top:211.3px;font-size:12px;line-height:12px;color:#444;font-weight:400;">O</div>
<div class="t" style="left:1046.0px;top:211.3px;font-size:12px;line-height:12px;color:#444;font-weight:400;">P</div>
<div class="t" style="left:8.1px;top:223.9px;font-size:11px;line-height:11px;color:#217346;font-weight:700;transform:scaleX(1.0400);">1</div>
<div class="t" style="left:9.0px;top:272.0px;font-size:12px;line-height:12px;color:#444;font-weight:400;">2</div>
<div class="t" style="left:9.0px;top:335.0px;font-size:12px;line-height:12px;color:#444;font-weight:400;">3</div>
<div class="t" style="left:9.0px;top:361.0px;font-size:12px;line-height:12px;color:#444;font-weight:400;">4</div>
<div class="t" style="left:9.0px;top:387.0px;font-size:12px;line-height:12px;color:#444;font-weight:400;">5</div>
<div class="t" style="left:9.0px;top:413.0px;font-size:12px;line-height:12px;color:#444;font-weight:400;">6</div>
<div class="t" style="left:9.0px;top:439.0px;font-size:12px;line-height:12px;color:#444;font-weight:400;">7</div>
<div class="t" style="left:9.0px;top:465.0px;font-size:12px;line-height:12px;color:#444;font-weight:400;">8</div>
<div class="t" style="left:9.0px;top:491.0px;font-size:12px;line-height:12px;color:#444;font-weight:400;">9</div>
<div class="t" style="left:6.0px;top:517.0px;font-size:12px;line-height:12px;color:#444;font-weight:400;">10</div>
<div class="t" style="left:6.0px;top:543.0px;font-size:12px;line-height:12px;color:#444;font-weight:400;">11</div>
<div class="t" style="left:6.0px;top:569.0px;font-size:12px;line-height:12px;color:#444;font-weight:400;">12</div>
<div class="t" style="left:6.0px;top:595.0px;font-size:12px;line-height:12px;color:#444;font-weight:400;">13</div>
<div class="t" style="left:6.0px;top:621.0px;font-size:12px;line-height:12px;color:#444;font-weight:400;">14</div>
<div class="t" style="left:6.0px;top:647.0px;font-size:12px;line-height:12px;color:#444;font-weight:400;">15</div>
<div style="position:absolute;left:37px;top:375px;width:152px;height:52px;background:#25636c;"></div>
<div style="position:absolute;left:189px;top:375px;width:179px;height:27px;background:#bee3e9;"></div>
<div class="t" style="left:205.2px;top:382.8px;font-size:12px;line-height:12px;color:#1c1c1c;font-weight:400;transform:scaleX(1.0615);">Estimated</div>
<div class="t" style="left:306.0px;top:382.8px;font-size:12px;line-height:12px;color:#1c1c1c;font-weight:400;transform:scaleX(1.0515);">Actual</div>
<div class="t" style="left:201.9px;top:408.8px;font-size:12px;line-height:12px;color:#1c1c1c;font-weight:400;transform:scaleX(1.0865);">$1,640.00</div>
<div class="t" style="left:290.9px;top:408.8px;font-size:12px;line-height:12px;color:#1c1c1c;font-weight:400;transform:scaleX(1.0865);">$1,640.00</div>
<div style="position:absolute;left:37px;top:479px;width:152px;height:26px;background:#25636c;"></div>
<div style="position:absolute;left:189px;top:479px;width:179px;height:26px;background:#bee3e9;"></div>
<div class="t" style="left:51.4px;top:486.8px;font-size:12px;line-height:12px;color:#ffffff;font-weight:400;transform:scaleX(1.1368);">Site</div>
<div class="t" style="left:205.2px;top:486.8px;font-size:12px;line-height:12px;color:#1c1c1c;font-weight:400;transform:scaleX(1.0615);">Estimated</div>
<div class="t" style="left:306.0px;top:486.8px;font-size:12px;line-height:12px;color:#1c1c1c;font-weight:400;transform:scaleX(1.0515);">Actual</div>
<div class="t" style="left:50.9px;top:512.8px;font-size:12px;line-height:12px;color:#1c1c1c;font-weight:400;transform:scaleX(1.0765);">Room and hall fees</div>
<div class="t" style="left:208.1px;top:512.8px;font-size:12px;line-height:12px;color:#1c1c1c;font-weight:400;transform:scaleX(1.0762);">$500.00</div>
<div class="t" style="left:299.2px;top:512.8px;font-size:12px;line-height:12px;color:#1c1c1c;font-weight:400;transform:scaleX(1.0738);">$450.00</div>
<div class="t" style="left:50.9px;top:538.8px;font-size:12px;line-height:12px;color:#1c1c1c;font-weight:400;transform:scaleX(1.1065);">Site staff</div>
<div class="t" style="left:50.9px;top:564.8px;font-size:12px;line-height:12px;color:#1c1c1c;font-weight:400;transform:scaleX(1.0714);">Equipment</div>
<div class="t" style="left:52.0px;top:590.8px;font-size:12px;line-height:12px;color:#1c1c1c;font-weight:400;transform:scaleX(1.0871);">Tables and chairs</div>
<div style="position:absolute;left:37px;top:610px;width:331px;height:26px;background:#ddf0f3;"></div>
<div class="t" style="left:52.0px;top:616.8px;font-size:12px;line-height:12px;color:#1c1c1c;font-weight:400;transform:scaleX(1.1560);">Total</div>
<div class="t" style="left:208.1px;top:616.8px;font-size:12px;line-height:12px;color:#1c1c1c;font-weight:400;transform:scaleX(1.0762);">$500.00</div>
<div class="t" style="left:299.2px;top:616.8px;font-size:12px;line-height:12px;color:#1c1c1c;font-weight:400;transform:scaleX(1.0738);">$450.00</div>
<div style="position:absolute;left:363px;top:633px;width:4px;height:2px;background:#3b3fa6;"></div>
<div style="position:absolute;left:365px;top:631px;width:2px;height:4px;background:#3b3fa6;"></div>
<div style="position:absolute;left:396px;top:375px;width:152px;height:26px;background:#25636c;"></div>
<div style="position:absolute;left:548px;top:375px;width:179px;height:26px;background:#bee3e9;"></div>
<div class="t" style="left:410.2px;top:382.8px;font-size:12px;line-height:12px;color:#ffffff;font-weight:400;transform:scaleX(1.1068);">Program</div>
<div class="t" style="left:564.3px;top:382.8px;font-size:12px;line-height:12px;color:#1c1c1c;font-weight:400;transform:scaleX(1.0615);">Estimated</div>
<div class="t" style="left:665.0px;top:382.8px;font-size:12px;line-height:12px;color:#1c1c1c;font-weight:400;transform:scaleX(1.0485);">Actual</div>
<div class="t" style="left:410.2px;top:408.8px;font-size:12px;line-height:12px;color:#1c1c1c;font-weight:400;transform:scaleX(1.1017);">Performers</div>
<div class="t" style="left:567.0px;top:408.8px;font-size:12px;line-height:12px;color:#1c1c1c;font-weight:400;transform:scaleX(1.0786);">$750.00</div>
<div class="t" style="left:657.9px;top:408.8px;font-size:12px;line-height:12px;color:#1c1c1c;font-weight:400;transform:scaleX(1.0786);">$700.00</div>
<div class="t" style="left:410.2px;top:434.8px;font-size:12px;line-height:12px;color:#1c1c1c;font-weight:400;transform:scaleX(1.0755);">Speakers</div>
<div class="t" style="left:567.0px;top:434.8px;font-size:12px;line-height:12px;color:#1c1c1c;font-weight:400;transform:scaleX(1.0786);">$150.00</div>
<div class="t" style="left:664.9px;top:434.8px;font-size:12px;line-height:12px;color:#1c1c1c;font-weight:400;transform:scaleX(1.1214);">$0.00</div>
<div class="t" style="left:411.3px;top:460.8px;font-size:12px;line-height:12px;color:#1c1c1c;font-weight:400;transform:scaleX(1.058);">Travel</div>
<div class="t" style="left:411.3px;top:486.8px;font-size:12px;line-height:12px;color:#1c1c1c;font-weight:400;transform:scaleX(1.058);">Hotel</div>
<div class="t" style="left:411.3px;top:512.8px;font-size:12px;line-height:12px;color:#1c1c1c;font-weight:400;transform:scaleX(1.058);">Other</div>
<div style="position:absolute;left:396px;top:532px;width:331px;height:26px;background:#ddf0f3;"></div>
<div class="t" style="left:411.3px;top:538.8px;font-size:12px;line-height:12px;color:#1c1c1c;font-weight:400;transform:scaleX(1.1440);">Total</div>
<div class="t" style="left:567.1px;top:538.8px;font-size:12px;line-height:12px;color:#1c1c1c;font-weight:400;transform:scaleX(1.0810);">$900.00</div>
<div class="t" style="left:657.9px;top:538.8px;font-size:12px;line-height:12px;color:#1c1c1c;font-weight:400;transform:scaleX(1.0786);">$700.00</div>
<div style="position:absolute;left:722px;top:555px;width:4px;height:2px;background:#3b3fa6;"></div>
<div style="position:absolute;left:724px;top:553px;width:2px;height:4px;background:#3b3fa6;"></div>
<div style="position:absolute;left:396px;top:583px;width:152px;height:26px;background:#25636c;"></div>
<div style="position:absolute;left:548px;top:583px;width:179px;height:26px;background:#bee3e9;"></div>
<div class="t" style="left:410.3px;top:590.8px;font-size:12px;line-height:12px;color:#ffffff;font-weight:400;transform:scaleX(1.0455);">Publicity</div>
<div class="t" style="left:564.3px;top:590.8px;font-size:12px;line-height:12px;color:#1c1c1c;font-weight:400;transform:scaleX(1.0615);">Estimated</div>
<div class="t" style="left:665.0px;top:590.8px;font-size:12px;line-height:12px;color:#1c1c1c;font-weight:400;transform:scaleX(1.0485);">Actual</div>
<div class="t" style="left:410.2px;top:616.8px;font-size:12px;line-height:12px;color:#1c1c1c;font-weight:400;transform:scaleX(1.0760);">Graphics work</div>
<div class="t" style="left:410.2px;top:642.8px;font-size:12px;line-height:12px;color:#1c1c1c;font-weight:400;transform:scaleX(1.0689);">Photocopying / Printing</div>
<div class="t" style="left:569.7px;top:642.8px;font-size:12px;line-height:12px;color:#1c1c1c;font-weight:400;transform:scaleX(1.1114);">$20.00</div>
<div class="t" style="left:662.1px;top:642.8px;font-size:12px;line-height:12px;color:#1c1c1c;font-weight:400;transform:scaleX(1.1000);">$20.00</div>
<div style="position:absolute;left:32px;top:242px;width:227px;height:175px;background:#ffffe1;border:1px solid #666"></div>
<div class="t" style="left:36.7px;top:247.7px;font-size:12px;line-height:12px;color:#575757;font-weight:700;transform:scaleX(0.9882);">Event Budget</div>
<div class="t" style="left:38.4px;top:277.0px;font-size:12px;line-height:12px;color:#575757;font-weight:400;transform:scaleX(0.9971);">Create an Event Budget with profit and</div>
<div class="t" style="left:38.4px;top:291.7px;font-size:12px;line-height:12px;color:#575757;font-weight:400;transform:scaleX(1.0087);">loss summary using this workbook.</div>
<div class="t" style="left:38.4px;top:321.7px;font-size:12px;line-height:12px;color:#575757;font-weight:400;transform:scaleX(0.9669);">Enter Event Name in cell B2.</div>
<div class="t" style="left:38.4px;top:352.0px;font-size:12px;line-height:12px;color:#575757;font-weight:400;transform:scaleX(0.9627);">Enter Expenses details in this worksheet.</div>
<div class="t" style="left:38.4px;top:366.8px;font-size:12px;line-height:12px;color:#575757;font-weight:400;transform:scaleX(0.9916);">Enter Income details in the next</div>
<div class="t" style="left:39.4px;top:381.8px;font-size:12px;line-height:12px;color:#575757;font-weight:400;transform:scaleX(0.9874);">worksheet. Profit and Loss Summary will</div>
<div class="t" style="left:38.4px;top:396.8px;font-size:12px;line-height:12px;color:#575757;font-weight:400;transform:scaleX(1.0178);">be automatically updated.</div>
</body></html>
